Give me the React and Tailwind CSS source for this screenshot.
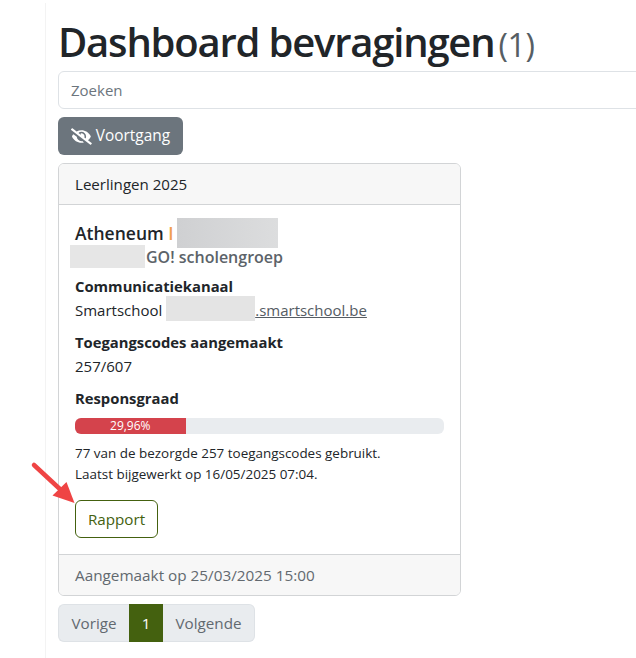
import { FaEyeSlash } from 'react-icons/fa';

const App = () => {
  return (
    <div className="relative w-[636px] h-[658px] overflow-hidden bg-white text-[#212529] font-['Open_Sans',sans-serif]">
      {/* sidebar edge */}
      <div className="absolute left-0 top-[3px] bottom-0 w-[46px] border-r border-[#f3f3f3]"></div>

      <main className="pl-[58px] w-[760px]">
        <h1 className="h-[71px] pt-[15px] text-[40px] leading-[54px] font-semibold tracking-[-1.2px] whitespace-nowrap">
          Dashboard bevragingen<span className="ml-[4px] text-[32px] font-medium text-[#565e64] tracking-[-0.3px]">(1)</span>
        </h1>

        <input
          placeholder="Zoeken"
          className="block w-full h-[38px] px-3 border border-[#dee2e6] rounded-[6px] text-[15px] placeholder:text-[#6c757d] outline-none"
        />

        <button className="mt-2 flex items-center gap-[4px] h-[38px] w-[125px] px-[13px] rounded-[6px] bg-[#6c757d] text-white text-[15.4px]">
          <FaEyeSlash size={21} />
          Voortgang
        </button>

        <section className="mt-2 w-[403px] h-[433px] flex flex-col border border-[#d2d4d6] rounded-[6px] overflow-hidden">
          <header className="h-[41px] shrink-0 flex items-center px-4 bg-[#f7f7f7] border-b border-[#d2d4d6] text-[15.1px]">
            Leerlingen 2025
          </header>

          <div className="flex-1 pt-4 px-4">
            <div className="relative h-[25px] text-[17.5px] leading-[25px] font-semibold">
              Atheneum <span className="text-[#f0a050]">I</span>
              <div className="absolute left-[102px] top-[-3px] w-[101px] h-[30px] bg-gradient-to-r from-[#cfd0d2] to-[#dcddde]"></div>
            </div>
            <div className="relative h-[23px] pl-[71px] text-[16px] leading-[23px] font-semibold text-[#5c6369]">
              GO! scholengroep
              <div className="absolute left-[-5px] top-[-1px] w-[75px] h-[23px] bg-[#e6e6e6]"></div>
            </div>

            <div className="mt-[7px] text-[14.8px] leading-[21px] font-bold">Communicatiekanaal</div>
            <div className="relative mt-[3px] text-[15px] leading-[21px]">
              Smartschool <span className="ml-[89px] underline text-[#555c63]">.smartschool.be</span>
              <div className="absolute left-[91px] top-[-4px] w-[89px] h-[25px] bg-[#e4e4e4]"></div>
            </div>

            <div className="mt-[11px] text-[14.8px] leading-[21px] font-bold">Toegangscodes aangemaakt</div>
            <div className="mt-[3px] text-[15px] leading-[21px]">257/607</div>

            <div className="mt-[11px] text-[14.8px] leading-[21px] font-bold">Responsgraad</div>
            <div className="mt-[9px] h-4 rounded-[6px] bg-[#e9ecef] overflow-hidden">
              <div className="w-[29.96%] h-full bg-[#d4434c] text-white text-[12px] leading-4 text-center">29,96%</div>
            </div>
            <p className="mt-[9px] text-[13.45px] leading-[21px]">
              77 van de bezorgde 257 toegangscodes gebruikt.<br />
              Laatst bijgewerkt op 16/05/2025 07:04.
            </p>
            <button className="mt-[15px] h-[38px] w-[83px] border border-[#44610f] rounded-[6px] text-[#44610f] text-[15.2px]">
              Rapport
            </button>
          </div>

          <footer className="h-[41px] shrink-0 flex items-center px-4 bg-[#f7f7f7] border-t border-[#d2d4d6] text-[15.3px] text-[#62696f]">
            Aangemaakt op 25/03/2025 15:00
          </footer>
        </section>

        <nav className="mt-2 flex w-max h-[38px] text-[15.2px] text-[#62696f]">
          <span className="w-[71px] flex items-center justify-center bg-[#e9ecef] border border-[#dee2e6] border-r-0 rounded-l-[6px]">Vorige</span>
          <span className="w-[34px] flex items-center justify-center bg-[#44610f] text-white">1</span>
          <span className="w-[92px] flex items-center justify-center bg-[#e9ecef] border border-[#dee2e6] border-l-0 rounded-r-[6px]">Volgende</span>
        </nav>
      </main>

      {/* annotation arrow */}
      <svg className="absolute left-[30px] top-[460px]" width="48" height="46" viewBox="0 0 48 46">
        <path d="M4 5 L32 31" stroke="#ef4444" strokeWidth="4.5" strokeLinecap="round" />
        <path d="M44.5 43 L22.5 35.5 L36.5 22 Z" fill="#ef4444" />
      </svg>
    </div>
  );
};

export default App;
